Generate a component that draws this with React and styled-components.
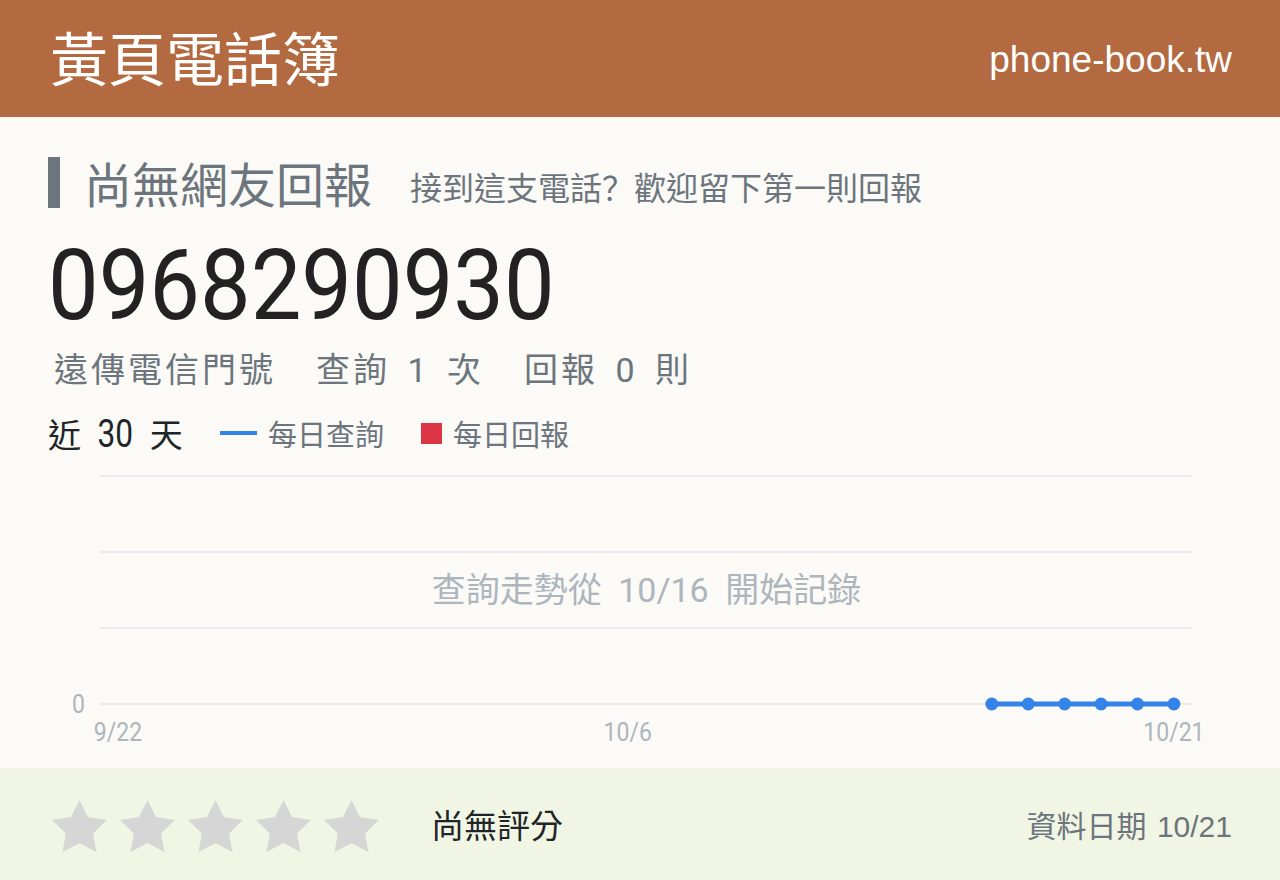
import React from "react";
import styled, { createGlobalStyle } from "styled-components";

const GlobalStyle = createGlobalStyle`
  html, body {
    margin: 0;
    padding: 0;
    background: #fbfaf6;
  }
  body {
    font-family: "Liberation Sans", "Noto Sans CJK TC", sans-serif;
    color: #212529;
  }
  * { box-sizing: border-box; }
`;

const CJK = `"Noto Sans CJK TC", "Liberation Sans", sans-serif`;
const MIXED = `Roboto, "Noto Sans CJK TC", sans-serif`;

const Page = styled.div`
  width: 1280px;
  min-height: 880px;
  display: flex;
  flex-direction: column;
  background: #fbfaf6;
`;

const Header = styled.header`
  height: 117px;
  background: #b36a40;
  display: flex;
  align-items: center;
  justify-content: space-between;
  padding: 0 48px 0 50px;
  color: #fff;
`;

const Brand = styled.h1`
  margin: -6px 0 0;
  font-family: ${CJK};
  font-weight: 400;
  font-size: 58px;
  line-height: 1;
`;

const Domain = styled.div`
  font-family: "Liberation Sans", sans-serif;
  font-size: 37px;
  margin-top: 2px;
`;

const Main = styled.main`
  flex: 1;
  padding: 40px 48px 12px;
  display: flex;
  flex-direction: column;
`;

const TitleRow = styled.div`
  display: flex;
  align-items: flex-end;
  gap: 38px;
`;

const Title = styled.h2`
  margin: 0;
  border-left: 12px solid #6c757d;
  padding-left: 24px;
  font-family: ${CJK};
  font-weight: 400;
  font-size: 48px;
  line-height: 51px;
  color: #6c757d;
`;

const Hint = styled.span`
  font-family: ${CJK};
  font-size: 32px;
  line-height: 44px;
  color: #6c757d;
`;

const LeftPunct = styled.span`
  font-family: "Noto Sans CJK SC", "Noto Sans CJK TC", sans-serif;
`;

const NumberLine = styled.div`
  margin-top: 29px;
  height: 98px;
`;

const Number = styled.span`
  display: inline-block;
  font-family: Roboto, sans-serif;
  font-size: 98px;
  line-height: 98px;
  color: #222;
  transform: scaleX(0.92);
  transform-origin: left center;
`;

const Stats = styled.div`
  margin-top: 13px;
  display: flex;
  gap: 40px;
  padding-left: 6px;
  font-family: ${MIXED};
  font-size: 34px;
  line-height: 44px;
  color: #6c757d;
`;

const Stat = styled.span`
  letter-spacing: 3px;
  word-spacing: ${(p) => p.$wide || 0}px;
`;

const Legend = styled.div`
  margin-top: 21px;
  height: 40px;
  display: flex;
  align-items: center;
  font-family: ${MIXED};
`;

const Range = styled.span`
  font-size: 33px;
  color: #212529;
  word-spacing: 4px;
  margin-right: 37px;
`;

const TallDigits = styled.span`
  display: inline-block;
  font-size: 1.2em;
  line-height: 1;
  transform: scaleX(0.8);
`;

const Key = styled.span`
  display: flex;
  align-items: center;
  gap: 11px;
  margin-right: 37px;
  font-size: 29px;
  color: #6c757d;
`;

const LineSwatch = styled.i`
  display: block;
  width: 37px;
  height: 4px;
  background: #3483e8;
`;

const BoxSwatch = styled.i`
  display: block;
  width: 21px;
  height: 21px;
  background: #dc3545;
`;

const ChartWrap = styled.div`
  margin-top: 13px;
  height: 290px;
  svg { display: block; }
`;

const Footer = styled.footer`
  height: 112px;
  background: #f1f5e3;
  display: flex;
  align-items: center;
  padding: 0 48px 0 52px;
`;

const Stars = styled.div`
  display: flex;
  gap: 13px;
  margin-top: 4px;
`;

const NoRating = styled.span`
  margin-left: 52px;
  font-family: ${CJK};
  font-size: 33px;
  color: #212529;
`;

const DataDate = styled.span`
  margin-left: auto;
  font-family: "Liberation Sans", "Noto Sans CJK TC", sans-serif;
  font-size: 30px;
  word-spacing: 2px;
  color: #6c757d;
`;

const Star = () => (
  <svg width="55" height="52" viewBox="2 2 20 19.02" aria-hidden="true">
    <polygon
      fill="#d5d6d5"
      points="12,2 15.09,8.26 22,9.27 17,14.14 18.18,21.02 12,17.77 5.82,21.02 7,14.14 2,9.27 8.91,8.26"
    />
  </svg>
);

const GRID_Y = [10, 86, 162, 238];
const X0 = 70;
const STEP = 36.41;
const queries = [0, 0, 0, 0, 0, 0]; // 10/16 .. 10/21
const FIRST_DAY = 24;

const AxisLabel = ({ x, y, anchor = "middle", children }) => (
  <text
    transform={`translate(${x} ${y}) scale(0.92 1)`}
    textAnchor={anchor}
    fontFamily="Roboto, sans-serif"
    fontSize="25"
    fill="#adb5bd"
  >
    {children}
  </text>
);

const TrendChart = () => {
  const pts = queries.map((v, i) => [X0 + (FIRST_DAY + i) * STEP, 238 - v * 76]);
  return (
    <svg width="1184" height="290" viewBox="0 0 1184 290">
      {GRID_Y.map((y) => (
        <line key={y} x1="52" x2="1145" y1={y} y2={y} stroke="#e9ebee" strokeWidth="2" />
      ))}
      <AxisLabel x={37} y={247} anchor="end">0</AxisLabel>
      <AxisLabel x={X0} y={275}>9/22</AxisLabel>
      <AxisLabel x={X0 + 14 * STEP} y={275}>10/6</AxisLabel>
      <AxisLabel x={X0 + 29 * STEP} y={275}>10/21</AxisLabel>
      <text
        x="598.5"
        y="136"
        textAnchor="middle"
        fontFamily={MIXED}
        fontSize="34"
        fill="#adb5bd"
        style={{ wordSpacing: 8 }}
      >
        查詢走勢從 10/16 開始記錄
      </text>
      <polyline
        points={pts.map((p) => p.join(",")).join(" ")}
        fill="none"
        stroke="#3483e8"
        strokeWidth="5"
      />
      {pts.map(([x, y]) => (
        <circle key={x} cx={x} cy={y} r="6.5" fill="#3483e8" />
      ))}
    </svg>
  );
};

export default function App() {
  return (
    <Page>
      <GlobalStyle />
      <Header>
        <Brand>黃頁電話簿</Brand>
        <Domain>phone-book.tw</Domain>
      </Header>
      <Main>
        <TitleRow>
          <Title>尚無網友回報</Title>
          <Hint>
            接到這支電話<LeftPunct>？</LeftPunct>歡迎留下第一則回報
          </Hint>
        </TitleRow>
        <NumberLine>
          <Number>0968290930</Number>
        </NumberLine>
        <Stats>
          <Stat>遠傳電信門號</Stat>
          <Stat $wide={6}>查詢 1 次</Stat>
          <Stat $wide={6}>回報 0 則</Stat>
        </Stats>
        <Legend>
          <Range>
            近 <TallDigits>30</TallDigits> 天
          </Range>
          <Key>
            <LineSwatch />
            每日查詢
          </Key>
          <Key>
            <BoxSwatch />
            每日回報
          </Key>
        </Legend>
        <ChartWrap>
          <TrendChart />
        </ChartWrap>
      </Main>
      <Footer>
        <Stars>
          {[0, 1, 2, 3, 4].map((i) => (
            <Star key={i} />
          ))}
        </Stars>
        <NoRating>尚無評分</NoRating>
        <DataDate>資料日期 10/21</DataDate>
      </Footer>
    </Page>
  );
}
